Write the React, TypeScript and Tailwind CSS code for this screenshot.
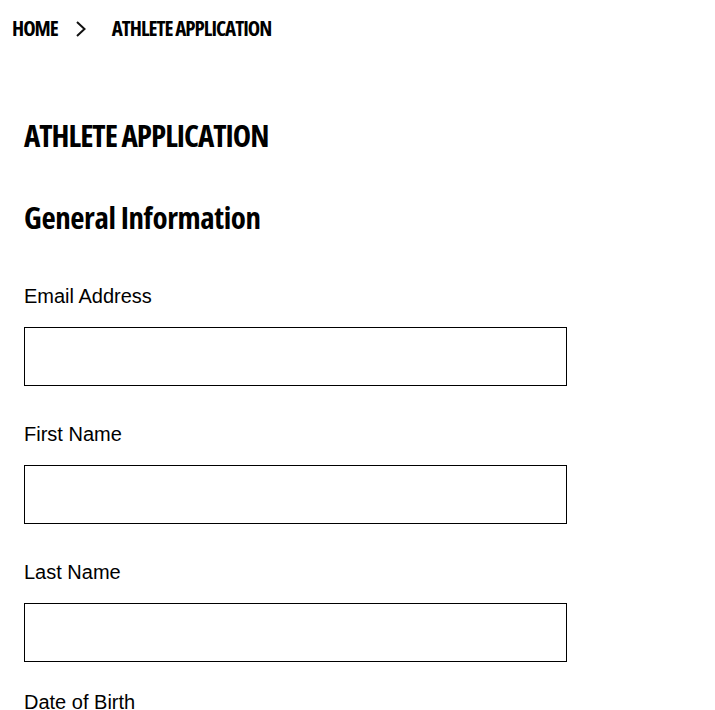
import React from 'react'

const headingFont = "font-['Open_Sans',sans-serif] font-bold [font-stretch:75%] uppercase text-black"

const fields = [
  { label: 'Email Address', gap: 'mb-[38px]' },
  { label: 'First Name', gap: 'mb-[38px]' },
  { label: 'Last Name', gap: 'mb-[30px]' },
  { label: 'Date of Birth', gap: 'mb-[38px]' },
]

const Chevron = () => (
  <svg width="12" height="18" viewBox="0 0 12 18" fill="none" className="block">
    <polyline points="2,2 9.5,9 2,16" stroke="#111" strokeWidth="2" />
  </svg>
)

const Field = ({ label, gap }: { label: string; gap: string }) => (
  <div className={gap}>
    <label className="block font-['Liberation_Sans',Arial,sans-serif] text-[20px] leading-[20px] text-black">
      {label}
    </label>
    <input
      type="text"
      className="mt-[21px] block w-[543px] h-[59px] border border-black bg-white outline-none"
    />
  </div>
)

export default function App() {
  return (
    <div className="bg-white min-h-screen overflow-hidden">
      <nav className={`flex items-center pl-3 pt-[18px] text-[21px] leading-none tracking-[-1px] ${headingFont}`}>
        <span>Home</span>
        <span className="ml-[17px] mr-[25px]">
          <Chevron />
        </span>
        <span>Athlete Application</span>
      </nav>
      <div className="pl-6">
        <h1 className={`mt-[81px] text-[31px] leading-none tracking-[-1px] ${headingFont}`}>
          Athlete Application
        </h1>
        <h2 className="mt-[51px] font-['Open_Sans',sans-serif] font-bold [font-stretch:75%] text-[31px] leading-none tracking-[-0.4px] text-black">
          General Information
        </h2>
        <form className="mt-[53px]">
          {fields.map((f) => (
            <Field key={f.label} label={f.label} gap={f.gap} />
          ))}
        </form>
      </div>
    </div>
  )
}
